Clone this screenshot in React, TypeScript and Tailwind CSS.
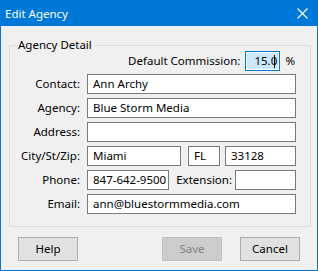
import React from 'react';

const font = { fontFamily: '"Noto Sans", "Open Sans", sans-serif' };

const Field: React.FC<{ value?: string; className?: string }> = ({ value, className }) => (
  <div className={`h-[20px] border border-[#7a7a7a] bg-white pl-[5px] flex items-center text-[11.5px] text-black leading-none whitespace-nowrap overflow-hidden ${className || ''}`}>
    {value}
  </div>
);

const Label: React.FC<{ children: React.ReactNode }> = ({ children }) => (
  <div className="h-[20px] flex items-center justify-end text-[11.5px] text-black leading-none">{children}</div>
);

export default function App() {
  return (
    <div style={font} className="w-[318px] h-[271px] border border-[#0078d7] bg-[#f0f0f0] flex flex-col select-none">
      {/* Title bar */}
      <div className="h-[25px] bg-[#0078d7] flex items-center justify-between pl-[4px] pr-[9px] text-white text-[11.5px]">
        <span>Edit Agency</span>
        <svg width="11" height="11" viewBox="0 0 11 11">
          <path d="M0.5 0.5 L10.5 10.5 M10.5 0.5 L0.5 10.5" stroke="white" strokeWidth="1.1" />
        </svg>
      </div>

      {/* Group box */}
      <fieldset className="ml-[8px] mt-[13px] w-[302px] border border-[#dcdcdc] pb-[12px]">
        <legend className="ml-[6px] px-[2px] text-[11.5px] leading-[12px] text-black">Agency Detail</legend>

        <div className="h-[20px] flex items-center justify-end pr-[15px] gap-[5px] text-[11.5px] text-black">
          <span>Default Commission:</span>
          <div className="w-[35px] h-[20px] border border-[#0078d7] bg-white p-[1px]">
            <div className="h-full bg-[#cce8ff] flex items-center pl-[7px] leading-none">
              15.0<span className="w-[1px] h-[13px] bg-black -ml-[3px]" />
            </div>
          </div>
          <span>%</span>
        </div>

        <div className="mt-[3px] grid grid-cols-[70px_209px] gap-x-[7px] gap-y-[4px]">
          <Label>Contact:</Label>
          <Field value="Ann Archy" />

          <Label>Agency:</Label>
          <Field value="Blue Storm Media" />

          <Label>Address:</Label>
          <Field />

          <Label>City/St/Zip:</Label>
          <div className="flex">
            <Field value="Miami" className="w-[94px]" />
            <Field value="FL" className="w-[32px] ml-[7px]" />
            <Field value="33128" className="w-[71px] ml-[5px]" />
          </div>

          <Label>Phone:</Label>
          <div className="flex items-center">
            <Field value="847-642-9500" className="w-[82px]" />
            <span className="flex-1 text-right pr-[3px] text-[11.5px] text-black">Extension:</span>
            <Field className="w-[61px]" />
          </div>

          <Label>Email:</Label>
          <Field value="ann@bluestormmedia.com" />
        </div>
      </fieldset>

      {/* Buttons */}
      <div className="mt-[10px] flex text-[11.5px]">
        <button className="ml-[17px] w-[60px] h-[24px] border border-[#adadad] bg-[#e1e1e1] text-black">Help</button>
        <button disabled className="ml-[84px] w-[60px] h-[24px] border border-[#bfbfbf] bg-[#cccccc] text-[#838383]">Save</button>
        <button className="ml-[18px] w-[60px] h-[24px] border border-[#adadad] bg-[#e1e1e1] text-black">Cancel</button>
      </div>
    </div>
  );
}
